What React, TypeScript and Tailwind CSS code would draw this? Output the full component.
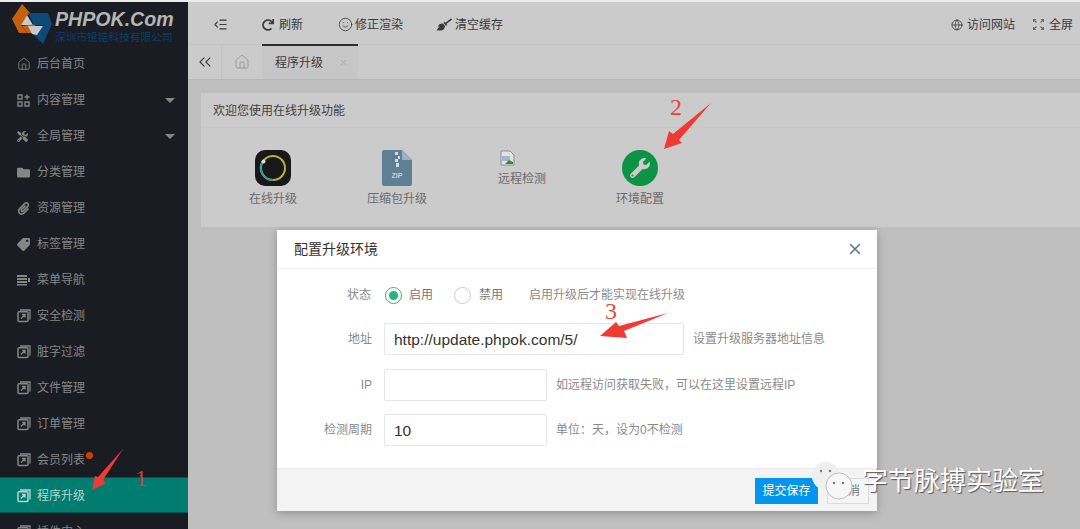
import { ChevronsLeft, Globe, House, IndentDecrease, Smile, X } from "lucide-react";
import { FaBroom, FaFolder, FaPaperclip, FaRedo, FaTag, FaTools, FaWrench } from "react-icons/fa";

const font = "font-['Liberation_Sans','Noto_Sans_CJK_SC',sans-serif]";

function LinkBox() {
  return (
    <svg width="14" height="14" viewBox="0 0 14 14" fill="none" stroke="currentColor">
      <path d="M3 1h10v9.5" strokeWidth="1.3" />
      <rect x="1" y="2.7" width="10" height="9.8" rx="1" strokeWidth="1.5" />
      <path d="M4 9.5l3.5-3.5M5 5.5h3v3" strokeWidth="1.4" />
    </svg>
  );
}

function Blocks() {
  return (
    <svg width="13" height="13" viewBox="0 0 13 13" fill="none" stroke="currentColor" strokeWidth="1.4">
      <rect x="1" y="1" width="4" height="4" />
      <rect x="1" y="8" width="4" height="4" />
      <rect x="8" y="8" width="4" height="4" />
      <path d="M10 0.5v5M7.5 3h5" />
    </svg>
  );
}

function MenuNav() {
  return (
    <svg width="14" height="12" viewBox="0 0 14 12" fill="currentColor">
      <rect x="0" y="1" width="10" height="2" />
      <rect x="0" y="4" width="10" height="2" />
      <rect x="0" y="7" width="10" height="2" />
      <rect x="0" y="10" width="10" height="1.5" />
      <rect x="11" y="4" width="2" height="4" />
    </svg>
  );
}

function FullscreenIcon() {
  return (
    <svg width="11" height="11" viewBox="0 0 11 11" fill="none" stroke="#6a6a6a" strokeWidth="1.1">
      <path d="M0.5 3V0.5H3M8 0.5h2.5V3M10.5 8v2.5H8M3 10.5H0.5V8" />
      <path d="M1 1l2.5 2.5M10 1L7.5 3.5M10 10L7.5 7.5M1 10l2.5-2.5" />
    </svg>
  );
}

function Logo() {
  return (
    <svg width="42" height="42" viewBox="0 0 42 42" className="shrink-0">
      <path d="M10 0 L19 10 L15 11 L9 21 L15 29 L7 29 L0 15 Z" fill="#c85f0c" />
      <path d="M9 21 L15 11 L21 21 Z" fill="#c9c9c9" />
      <path d="M19 10 L24 20 L10 22 L15 29 L26 29 L19 10 Z" fill="#c85f0c" />
      <path d="M16 9 L36 9 L40 20 L31 40 L21 30 L26 30 L31 21 L22 21 Z" fill="#0d4a78" />
      <path d="M16 22 L31 22 L25 31 L20 30 Z" fill="#c9c9c9" />
    </svg>
  );
}

const menu: { label: string; icon: React.ReactNode; caret?: boolean; dot?: boolean; active?: boolean }[] = [
  { label: "后台首页", icon: <House size={14} strokeWidth={1.5} /> },
  { label: "内容管理", icon: <Blocks />, caret: true },
  { label: "全局管理", icon: <FaTools size={11} />, caret: true },
  { label: "分类管理", icon: <FaFolder size={13} /> },
  { label: "资源管理", icon: <FaPaperclip size={13} /> },
  { label: "标签管理", icon: <FaTag size={13} className="-scale-x-100" /> },
  { label: "菜单导航", icon: <MenuNav /> },
  { label: "安全检测", icon: <LinkBox /> },
  { label: "脏字过滤", icon: <LinkBox /> },
  { label: "文件管理", icon: <LinkBox /> },
  { label: "订单管理", icon: <LinkBox /> },
  { label: "会员列表", icon: <LinkBox />, dot: true },
  { label: "程序升级", icon: <LinkBox />, active: true },
  { label: "插件中心", icon: <LinkBox /> },
];

function Sidebar() {
  return (
    <aside className="w-[188px] shrink-0 bg-[#1a1c23] overflow-hidden">
      <div className="h-[43px] flex items-start pl-[12px] pt-[2px] overflow-hidden">
        <Logo />
        <div className="ml-[1px] pt-[5px]">
          <div className="text-[19.6px] leading-[20px] font-bold italic text-[#b5b5b5] whitespace-nowrap">PHPOK.Com</div>
          <div className="text-[10.7px] leading-[13px] mt-[2px] text-[#0b3f68] whitespace-nowrap">深圳市锟锆科技有限公司</div>
        </div>
      </div>
      {menu.map((m) => (
        <div
          key={m.label}
          className={`h-[36px] flex items-center pl-[17px] pr-[13px] pt-[2px] text-[12px] ${
            m.active ? "bg-[#007d6e] text-[#b7d5d0] border-y border-[#06564d]" : "text-[#858585]"
          }`}
        >
          <span className="w-[20px] shrink-0 flex items-center">{m.icon}</span>
          <span className="relative">
            {m.label}
            {m.dot && <span className="absolute -right-[8px] top-[1px] w-[7px] h-[7px] rounded-full bg-[#d13f00]" />}
          </span>
          {m.caret && <span className="ml-auto w-0 h-0 border-x-[5px] border-x-transparent border-t-[5px] border-t-[#858585]" />}
        </div>
      ))}
    </aside>
  );
}

function Header() {
  return (
    <header className="h-[43px] shrink-0 flex items-center pt-[3px] text-[12px] text-[#3a3a3a] bg-[#cbcbcb] border-b border-[#c6c6c6]">
      <IndentDecrease size={15} strokeWidth={1.7} className="ml-[25px]" />
      <span className="ml-[34px] flex items-center gap-[5px]"><FaRedo size={12} />刷新</span>
      <span className="ml-[35px] flex items-center gap-[2px]"><Smile size={15} strokeWidth={1.3} />修正渲染</span>
      <span className="ml-[34px] flex items-center gap-[3px]"><FaBroom size={15} />清空缓存</span>
      <span className="ml-auto flex items-center gap-[4px]"><Globe size={12} strokeWidth={1.6} />访问网站</span>
      <span className="ml-[18px] mr-[7px] flex items-center gap-[5px]"><FullscreenIcon />全屏</span>
    </header>
  );
}

function Tabs() {
  return (
    <div className="h-[35px] shrink-0 flex bg-[#cbcbcb] border-b border-[#b7b7b7] text-[#3a3a3a]">
      <div className="w-[34px] flex items-center justify-center border-r border-[#c2c2c2]">
        <ChevronsLeft size={20} strokeWidth={1.3} />
      </div>
      <div className="w-[40px] flex items-center justify-center text-[#868686]">
        <House size={16} strokeWidth={1} />
      </div>
      <div className="w-[96px] -mt-[1px] flex items-center pl-[13px] text-[12px] bg-[#c6c6c6] border-t-[2px] border-[#2f2f2f]">
        程序升级
        <X size={9} className="ml-[16px] text-[#a3a3a3]" />
      </div>
    </div>
  );
}

function Tool({ icon, label, w }: { icon: React.ReactNode; label: string; w: string }) {
  return (
    <div className={`${w} shrink-0 flex flex-col items-center text-[12px] text-[#6a6a6a]`}>
      {icon}
      <span className="mt-[4px]">{label}</span>
    </div>
  );
}

function UpgradeCard() {
  return (
    <section className="mt-[13px] ml-[13px] h-[134px] bg-[#cbcbcb]">
      <div className="h-[35px] flex items-center pl-[12px] pt-[2px] text-[12px] text-[#3f3f3f] border-b border-[#c8c8c8]">欢迎您使用在线升级功能</div>
      <div className="flex pt-[22px] pl-[12px]">
        <Tool
          w="w-[120px]"
          label="在线升级"
          icon={
            <svg width="36" height="36" viewBox="0 0 36 36">
              <rect width="36" height="36" rx="10" fill="#181818" />
              <circle cx="18" cy="18" r="12" fill="none" stroke="#b9b23a" strokeWidth="2" />
              <path d="M18 30A12 12 0 0 1 8 11" fill="none" stroke="#2d9ca8" strokeWidth="2" />
              <circle cx="8.5" cy="11.5" r="2" fill="#d8d8d8" />
            </svg>
          }
        />
        <Tool
          w="w-[128px]"
          label="压缩包升级"
          icon={
            <svg width="30" height="36" viewBox="0 0 30 36">
              <path d="M2 0H20L30 10V34a2 2 0 0 1-2 2H2a2 2 0 0 1-2-2V2a2 2 0 0 1 2-2Z" fill="#5e7f95" />
              <path d="M20 0L30 10H20Z" fill="#9fb0bc" />
              <path d="M13 2h3v3h-3zM16 6h2v3h-2zM13 9h3v3h-3zM14 13h3v4h-3z" fill="#d8d8d8" />
              <text x="15" y="28" textAnchor="middle" fontSize="7" fontWeight="700" fill="#d0d0d0" fontFamily="Liberation Sans">ZIP</text>
            </svg>
          }
        />
        <div className="w-[100px] shrink-0 flex flex-col text-[12px] text-[#6a6a6a] pl-[37px]">
          <svg width="16" height="16" viewBox="0 0 16 16" className="ml-[2px]">
            <path d="M1 1h9l4 4v10H1Z" fill="#e3e3e3" stroke="#8d8d8d" />
            <path d="M2 6h8v5H2Z" fill="#9fb6d0" />
            <path d="M5 14l4-4 4 2v2Z" fill="#2f8a3a" />
          </svg>
          <span className="mt-[4px] whitespace-nowrap">远程检测</span>
        </div>
        <Tool
          w="w-[158px]"
          label="环境配置"
          icon={
            <div className="w-[36px] h-[36px] rounded-full bg-[#0b9444] flex items-center justify-center">
              <FaWrench size={20} className="text-[#cbcbcb]" />
            </div>
          }
        />
      </div>
    </section>
  );
}

function Row({ label, children, hint, inputW }: { label: string; children?: React.ReactNode; hint: string; inputW: string }) {
  return (
    <div className="flex items-center h-[32px]">
      <span className="w-[95px] text-right text-[12px] text-[#8a8a8a]">{label}</span>
      <div className={`ml-[12px] ${inputW} h-[32px] flex items-center px-[9px] pt-[2px] text-[15.5px] text-[#333] border border-[#e6e6e6] bg-white rounded-[2px]`}>
        {children}
      </div>
      <span className="ml-[9px] text-[12px] text-[#8a8a8a]">{hint}</span>
    </div>
  );
}

function Modal() {
  return (
    <div className="absolute left-[277px] top-[230px] w-[600px] h-[281px] bg-white shadow-[0_2px_8px_rgba(0,0,0,0.25)] flex flex-col">
      <div className="h-[39px] shrink-0 flex items-center justify-between px-[17px] border-b border-[#eeeeee]">
        <span className="text-[14px] text-[#333]">配置升级环境</span>
        <X size={18} strokeWidth={2} className="text-[#5f7480] -mr-[4px]" />
      </div>
      <div className="flex-1 flex flex-col pt-[16px]">
        <div className="flex items-center h-[20px] text-[12px] text-[#8a8a8a]">
          <span className="w-[94px] text-right">状态</span>
          <span className="ml-[14px] w-[17px] h-[17px] rounded-full border border-[#25b57b] flex items-center justify-center">
            <span className="w-[9px] h-[9px] rounded-full bg-[#25b57b]" />
          </span>
          <span className="ml-[7px] text-[#777]">启用</span>
          <span className="ml-[21px] w-[17px] h-[17px] rounded-full border border-[#c9c9c9]" />
          <span className="ml-[8px] text-[#777]">禁用</span>
          <span className="ml-[26px]">启用升级后才能实现在线升级</span>
        </div>
        <div className="mt-[18px] flex flex-col gap-[13.5px]">
          <Row label="地址" inputW="w-[300px]" hint="设置升级服务器地址信息">http://update.phpok.com/5/</Row>
          <Row label="IP" inputW="w-[163px]" hint="如远程访问获取失败，可以在这里设置远程IP" />
          <Row label="检测周期" inputW="w-[163px]" hint="单位：天，设为0不检测">10</Row>
        </div>
      </div>
      <div className="h-[43px] shrink-0 flex items-start justify-end gap-[9px] pr-[8px] pt-[9px] bg-[#f3f3f3] border-t border-[#ececec]">
        <span className="w-[63px] h-[26px] flex items-center justify-center text-[12px] text-white bg-[#0095ee]">提交保存</span>
        <span className="w-[42px] h-[26px] flex items-center justify-center text-[12px] text-[#777] bg-[#f5f5f5] border border-[#dcdcdc]">取消</span>
      </div>
    </div>
  );
}

function Arrow({ points }: { points: string }) {
  return (
    <svg className="absolute left-0 top-0" viewBox="0 0 1080 529" width="1080" height="529">
      <polygon points={points} fill="#f03a35" />
    </svg>
  );
}

export default function App() {
  return (
    <div className={`relative w-[1080px] h-[529px] overflow-hidden bg-[#bfbfbf] ${font}`}>
      <div className="h-[2px] bg-[#ececec]" />
      <div className="flex h-[527px]">
        <Sidebar />
        <main className="flex-1 flex flex-col min-w-0">
          <Header />
          <Tabs />
          <UpgradeCard />
        </main>
      </div>

      <Modal />

      {/* annotations pasted over the screenshot */}
      <Arrow points="123,449 103,480 106,483 92,490 95,476 98,477" />
      <Arrow points="711,103 679,140 682,143 664,149 669,131 673,134" />
      <Arrow points="668,313 624,331 627,338 600,336 616,322 619,326" />
      <span className="absolute left-[135px] top-[465px] text-[24px] leading-[26px] text-[#c8423c] font-['Liberation_Serif',serif]">1</span>
      <span className="absolute left-[670px] top-[93px] text-[24px] leading-[28px] text-[#e8453f] font-['Liberation_Serif',serif]">2</span>
      <span className="absolute left-[605px] top-[297px] text-[24px] leading-[28px] text-[#e8453f] font-['Liberation_Serif',serif]">3</span>

      {/* wechat watermark */}
      <svg className="absolute left-[811px] top-[461px]" width="44" height="40" viewBox="0 0 44 40">
        <ellipse cx="15" cy="15" rx="14" ry="14" fill="#efefef" />
        <circle cx="10" cy="10" r="1.2" fill="#777" />
        <circle cx="19" cy="10" r="1.2" fill="#777" />
        <circle cx="28" cy="25" r="13" fill="#f7f7f7" stroke="#999" strokeWidth="0.6" />
        <circle cx="23" cy="22" r="1.2" fill="#777" />
        <circle cx="32" cy="22" r="1.2" fill="#777" />
      </svg>
      <span className="absolute left-[862px] top-[466px] text-[26px] leading-[30px] text-white whitespace-nowrap [text-shadow:1px_1px_1px_#555]">字节脉搏实验室</span>
    </div>
  );
}
